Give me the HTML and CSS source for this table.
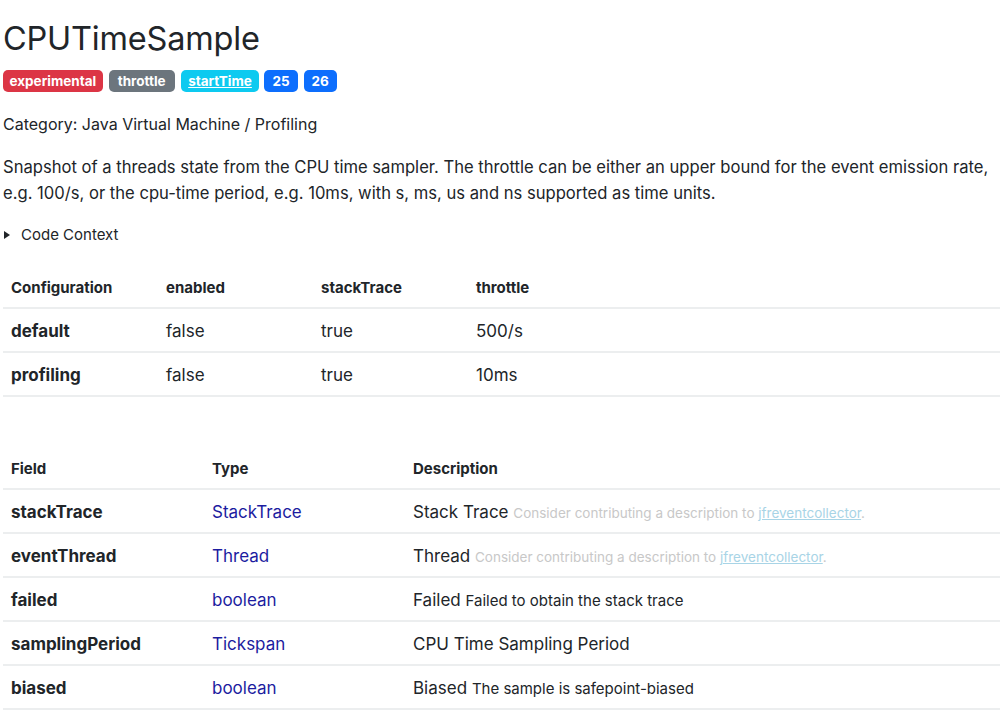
FILE: index.html
```html
<!DOCTYPE html>
<html>
<head>
<meta charset="utf-8">
<link rel="stylesheet" href="styles.css">
</head>
<body>
<main class="page">
  <h1 class="title">CPUTimeSample</h1>
  <div class="badges">
    <span class="badge badge-red">experimental</span>
    <span class="badge badge-grey">throttle</span>
    <a class="badge badge-cyan" href="#">startTime</a>
    <span class="badge badge-blue">25</span>
    <span class="badge badge-blue">26</span>
  </div>
  <p class="category">Category: Java Virtual Machine / Profiling</p>
  <p class="desc">Snapshot of a threads state from the CPU time sampler. The throttle can be either an upper bound for the event emission rate, e.g. 100/s, or the cpu-time period, e.g. 10ms, with s, ms, us and ns supported as time units.</p>
  <details class="context">
    <summary>Code Context</summary>
  </details>

  <table class="tbl config">
    <thead>
      <tr><th>Configuration</th><th>enabled</th><th>stackTrace</th><th>throttle</th><th class="fill"></th></tr>
    </thead>
    <tbody>
      <tr><td class="key">default</td><td>false</td><td>true</td><td>500/s</td><td class="fill"></td></tr>
      <tr><td class="key">profiling</td><td>false</td><td>true</td><td>10ms</td><td class="fill"></td></tr>
    </tbody>
  </table>

  <table class="tbl fields">
    <thead>
      <tr><th>Field</th><th>Type</th><th>Description</th></tr>
    </thead>
    <tbody>
      <tr><td class="key">stackTrace</td><td><a class="type" href="#">StackTrace</a></td><td>Stack Trace <span class="hint">Consider contributing a description to <a href="#">jfreventcollector</a>.</span></td></tr>
      <tr><td class="key">eventThread</td><td><a class="type" href="#">Thread</a></td><td>Thread <span class="hint">Consider contributing a description to <a href="#">jfreventcollector</a>.</span></td></tr>
      <tr><td class="key">failed</td><td><a class="type" href="#">boolean</a></td><td>Failed <span class="sub">Failed to obtain the stack trace</span></td></tr>
      <tr><td class="key">samplingPeriod</td><td><a class="type" href="#">Tickspan</a></td><td>CPU Time Sampling Period</td></tr>
      <tr><td class="key">biased</td><td><a class="type" href="#">boolean</a></td><td>Biased <span class="sub">The sample is safepoint-biased</span></td></tr>
    </tbody>
  </table>
</main>
</body>
</html>
```
FILE: styles.css
```css
html, body {
  margin: 0;
  padding: 0;
  background: #fff;
}
body {
  font-family: Inter, "Liberation Sans", sans-serif;
  color: #212529;
  font-size: 16px;
}
.page {
  padding: 0 0 0 3px;
  width: 997px;
}
.title {
  margin: 0;
  padding-top: 18px;
  font-size: 32.5px;
  font-weight: 400;
  line-height: 42px;
  letter-spacing: -0.2px;
}
.badges {
  display: flex;
  gap: 6px;
  margin-top: 10px;
}
.badge {
  display: inline-block;
  height: 22px;
  line-height: 22px;
  padding: 0 7px;
  border-radius: 5px;
  color: #fff;
  font-size: 13.5px;
  font-weight: 700;
}
.badge-red { background: #dc3545; padding: 0 6.5px; }
.badge-grey { background: #6c757d; padding: 0 9px; }
.badge-cyan { background: #0dcaf0; text-decoration: underline; padding: 0 7.5px; margin-right: -1px; }
.badge-blue { background: #0d6efd; padding: 0 8px; }
.category {
  margin: 20px 0 0;
  line-height: 24px;
}
.desc {
  margin: 18px 0 0;
  font-size: 16.6px;
  line-height: 26px;
}
.context {
  margin-top: 17px;
  font-size: 15px;
  line-height: 24px;
}
.context summary {
  cursor: pointer;
  list-style: none;
  display: flex;
  align-items: center;
}
.context summary::-webkit-details-marker {
  display: none;
}
.context summary::before {
  content: "";
  width: 0;
  height: 0;
  border-left: 6px solid #212529;
  border-top: 4px solid transparent;
  border-bottom: 4px solid transparent;
  margin: 0 11px 0 1px;
}
.tbl {
  border-collapse: collapse;
  width: 100%;
}
.tbl th {
  text-align: left;
  font-size: 15px;
  font-weight: 700;
  padding: 10px 8px 9px;
  border-bottom: 2px solid #eceeef;
  line-height: 20px;
}
.tbl td {
  padding: 11px 8px 9px;
  border-bottom: 2px solid #eceeef;
  font-size: 17px;
  line-height: 22px;
  height: 22px;
  vertical-align: middle;
  white-space: nowrap;
}
.tbl td.key {
  font-weight: 700;
}
.config {
  margin-top: 21px;
}
.config th, .config td {
  width: 139px;
}
.config .fill {
  width: auto;
}
.fields {
  margin-top: 52px;
}
.fields th:nth-child(1), .fields td:nth-child(1),
.fields th:nth-child(2), .fields td:nth-child(2) {
  width: 185px;
}
a.type {
  color: #1c1ca0;
  text-decoration: none;
}
.hint {
  font-size: 13.5px;
  line-height: 1;
  color: #c8c8c8;
}
.hint a {
  color: #a8d4e6;
  text-decoration: underline;
}
.sub {
  font-size: 15px;
  line-height: 1;
}
```
